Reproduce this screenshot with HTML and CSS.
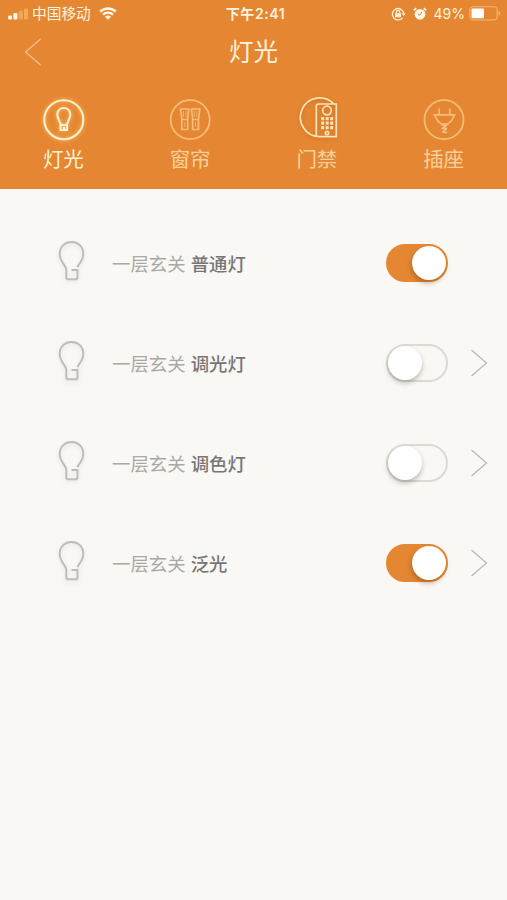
FILE: index.html
```html
<!DOCTYPE html>
<html lang="zh-CN">
<head>
  <meta charset="UTF-8">
  <meta name="viewport" content="width=device-width, initial-scale=1.0">
  <title>灯光</title>
  <link rel="stylesheet" href="styles.css">
</head>
<body>
  <svg class="defs" width="0" height="0">
    <symbol id="bulb" viewBox="0 0 28 42">
      <path d="M8.300 37V29.500C8.300 26 1.700 21.500 1.700 14C1.700 6.500 7 2 13.500 2S25.300 6.500 25.300 14C25.300 20 21.500 23 19.500 27M13.500 30H19.500V37.500Q19.500 39.200 18 39.200H9.800Q8.300 39.200 8.300 37.500V30"/>
    </symbol>
    <symbol id="arrow" viewBox="0 0 18 28">
      <path d="M1.500 1L16.500 14L1.500 27"/>
    </symbol>
  </svg>

  <header class="header">
    <div class="status">
      <div class="status-left">
        <svg class="signal" width="20" height="12" viewBox="0 0 20 12">
          <rect x="0" y="7.500" width="4" height="4" rx="1"/>
          <rect x="5.300" y="5" width="4.200" height="6.500" rx="1"/>
          <rect class="weak" x="10.800" y="2.800" width="4" height="8.700" rx="1"/>
          <rect class="weak" x="16" y="0.500" width="4" height="11" rx="1"/>
        </svg>
        <span class="carrier">中国移动</span>
        <svg class="wifi" width="18" height="13" viewBox="0 0 18 13">
          <path d="M1.200 4.700A11.200 11.200 0 0 1 16.800 4.700M4 7.600A7.200 7.200 0 0 1 14 7.600"/>
          <path class="dot" d="M9 12.800L6 9.800A4.200 4.200 0 0 1 12 9.800Z"/>
        </svg>
      </div>
      <span class="time">下午2:41</span>
      <div class="status-right">
        <svg class="lock" width="15" height="14" viewBox="0 0 15 14">
          <path d="M11.500 10.800A5.700 5.700 0 1 1 12.700 6.500M5.300 6.500V5.200A1.700 1.700 0 0 1 8.700 5.200V6.500"/>
          <path class="fill" d="M4 6.200H10V10.200H4ZM10.600 6.300H14.700L12.700 9Z"/>
        </svg>
        <svg class="alarm" width="14" height="14" viewBox="0 0 14 14">
          <circle cx="7" cy="7.300" r="5.400"/>
          <path class="ear" d="M1 3.200L3.200 1.300M13 3.200L10.800 1.300"/>
          <path class="hand" d="M8.800 4.800L7.200 7.800H5"/>
        </svg>
        <span class="percent">49%</span>
        <svg class="battery" width="32" height="15" viewBox="0 0 32 15">
          <rect class="case" x="0.700" y="0.700" width="27.500" height="13.300" rx="3"/>
          <rect class="level" x="2.500" y="2.500" width="12.500" height="9.700" rx="1"/>
          <path class="tip" d="M29.500 5Q31.300 6 31.300 7.400T29.500 9.800Z"/>
        </svg>
      </div>
    </div>

    <div class="title-bar">
      <svg class="back" width="18" height="28"><use href="#arrow"/></svg>
      <h1>灯光</h1>
    </div>

    <nav class="tabs">
      <a class="tab active">
        <svg width="44" height="44" viewBox="0 0 44 44">
          <circle cx="22.800" cy="21.700" r="19.500"/>
          <path d="M19.700 27C19.700 23.500 16.300 21.500 16.300 16.800C16.300 12.600 19 10 22.800 10S29.300 12.600 29.300 16.800C29.300 20.500 26.800 23 26 26.500M19.500 27H26V32H19.500ZM23 29V31"/>
        </svg>
        <span>灯光</span>
      </a>
      <a class="tab">
        <svg width="44" height="44" viewBox="0 0 44 44">
          <circle cx="22.200" cy="21.700" r="19.500"/>
          <path d="M12.500 11H20.800L19.700 21V31.500H13.800V21ZM23.500 11H31.800L30.500 21V31.500H24.600V21ZM13.800 21.500H19.700M24.600 21.500H30.500"/>
          <path class="fold" d="M15.500 13V19M18 13V19M26.300 13V19M28.800 13V19M16.800 24V29M27.500 24V29"/>
        </svg>
        <span>窗帘</span>
      </a>
      <a class="tab door">
        <svg width="44" height="44" viewBox="0 0 44 44">
          <path d="M38.900 6A19.400 19.400 0 1 0 24.800 38.700H41.300V6H23.500Q21.300 6 21.300 8.200V38.300"/>
          <circle cx="32" cy="12.500" r="4.300"/>
          <circle cx="32" cy="35" r="1.700"/>
          <path class="keys" d="M26.200 20.700H38.200M26.200 25.200H38.200M26.200 29.700H38.200"/>
        </svg>
        <span>门禁</span>
      </a>
      <a class="tab">
        <svg width="44" height="44" viewBox="0 0 44 44">
          <circle cx="22" cy="21.700" r="19.500"/>
          <path d="M17.200 10.500V16.500M27.800 10.500V16.500M11.500 16.800H33.500M13.300 17C13.300 22 16.500 23.500 19.500 26H25.500C28.500 23.500 31.700 22 31.700 17M20 26.500Q22.500 28.500 25 26.500L20.500 30.500Q22.500 31.500 25 30L21 34Q23 35 25 34"/>
        </svg>
        <span>插座</span>
      </a>
    </nav>
  </header>

  <main class="list">
    <div class="row">
      <svg class="bulb" width="28" height="42"><use href="#bulb"/></svg>
      <p class="name">一层玄关 <b>普通灯</b></p>
      <div class="switch on"><i></i></div>
    </div>
    <div class="row">
      <svg class="bulb" width="28" height="42"><use href="#bulb"/></svg>
      <p class="name">一层玄关 <b>调光灯</b></p>
      <div class="switch"><i></i></div>
      <svg class="more" width="18" height="28"><use href="#arrow"/></svg>
    </div>
    <div class="row">
      <svg class="bulb" width="28" height="42"><use href="#bulb"/></svg>
      <p class="name">一层玄关 <b>调色灯</b></p>
      <div class="switch"><i></i></div>
      <svg class="more" width="18" height="28"><use href="#arrow"/></svg>
    </div>
    <div class="row">
      <svg class="bulb" width="28" height="42"><use href="#bulb"/></svg>
      <p class="name">一层玄关 <b>泛光</b></p>
      <div class="switch on"><i></i></div>
      <svg class="more" width="18" height="28"><use href="#arrow"/></svg>
    </div>
  </main>
</body>
</html>
```
FILE: styles.css
```css
* {
  box-sizing: border-box;
}
body {
  margin: 0;
  min-height: 900px;
  background: #faf8f4;
  font-family: Inter, "Noto Sans CJK SC", sans-serif;
}
svg {
  display: block;
  flex: none;
  fill: none;
  overflow: visible;
}
.defs {
  position: absolute;
}

/* header */
.header {
  height: 189px;
  background: #e58732;
  color: #fff3dd;
}
.status {
  display: grid;
  grid-template-columns: 1fr auto 1fr;
  align-items: center;
  height: 28px;
  padding: 0 6px 0 8px;
  font-size: 14px;
  line-height: 28px;
}
.status-left,
.status-right {
  display: flex;
  align-items: center;
}
.status-right {
  justify-content: flex-end;
}
.signal {
  fill: #fff6e6;
}
.signal .weak {
  fill: #f0a956;
}
.carrier {
  margin: 0 8px 0 4px;
  font-size: 14.7px;
}
.wifi {
  margin-top: -2px;
  stroke: #fff6e6;
  stroke-width: 2.4;
}
.wifi .dot {
  fill: #fff6e6;
  stroke: none;
}
.time {
  padding-left: 2px;
  font-weight: 600;
  letter-spacing: 0.6px;
}
.lock {
  margin-right: 7px;
  stroke: #fff0d5;
  stroke-width: 1.3;
}
.lock .fill {
  fill: #fff0d5;
  stroke: none;
}
.alarm {
  margin-right: 7px;
  fill: #fff6e6;
}
.alarm .ear {
  stroke: #fff6e6;
  stroke-width: 1.8;
}
.alarm .hand {
  fill: none;
  stroke: #e58732;
}
.percent {
  margin-right: 4px;
  font-size: 14px;
}
.battery {
  margin-top: -1px;
}
.battery .case {
  stroke: #f6b873;
}
.battery .level {
  fill: #fff;
}
.battery .tip {
  fill: #f6b873;
}

.title-bar {
  display: grid;
  grid-template-columns: 1fr auto 1fr;
  align-items: center;
  height: 48px;
  padding: 0 24px;
}
.back {
  transform: scaleX(-1);
  stroke: #f8c88e;
  stroke-width: 1.1;
}
.title-bar h1 {
  margin: 0;
  font-size: 24.5px;
  font-weight: 400;
  line-height: 48px;
}

.tabs {
  display: grid;
  grid-template-columns: repeat(4, 1fr);
  padding-top: 22px;
}
.tab {
  display: flex;
  flex-direction: column;
  align-items: center;
  color: #fad09a;
  font-size: 20.5px;
  line-height: 36px;
}
.tab svg {
  stroke: #f8bd78;
  stroke-width: 1.7;
}
.tab .fold {
  stroke-width: 0.8;
}
.tab.active {
  color: #fff2d8;
}
.tab.active svg {
  stroke: #fff2d0;
  stroke-width: 2;
  filter: drop-shadow(0 0 2px #ffc76e);
}
.tab.door svg {
  stroke: #ffe3b8;
  filter: drop-shadow(0 1px 2px #c96f20);
}
.tab .keys {
  stroke-width: 3.2;
  stroke-dasharray: 3 1.5;
}

/* device list */
.list {
  padding-top: 24px;
}
.row {
  display: flex;
  align-items: center;
  height: 100px;
  padding: 0 19px 0 58px;
}
.bulb {
  margin: 0 26px 5px 0;
  stroke: #bdbcbc;
  stroke-width: 1.9;
  filter: drop-shadow(0 2px 2px #e4e1dc);
}
.name {
  flex: 1;
  margin: 0;
  color: #a9a8a6;
  font-family: "Noto Sans CJK SC", sans-serif;
  font-size: 18.4px;
}
.name b {
  margin-left: 1px;
  color: #777674;
  font-weight: 500;
}
.switch {
  width: 62px;
  height: 38px;
  margin-right: 40px;
  border: 2px solid #dddad4;
  border-radius: 19px;
}
.switch:not(:last-child) {
  margin-right: 22px;
}
.switch i {
  display: block;
  width: 34px;
  height: 34px;
  border-radius: 50%;
  background: #fff;
  box-shadow: 0 3px 5px rgba(80, 75, 65, 0.35);
}
.switch.on {
  border-color: #e58732;
  background: #e58732;
}
.switch.on i {
  margin-left: auto;
  box-shadow: -1px 3px 5px rgba(110, 65, 25, 0.4);
}
.more {
  stroke: #b9b6b2;
  stroke-width: 1.2;
}
```
